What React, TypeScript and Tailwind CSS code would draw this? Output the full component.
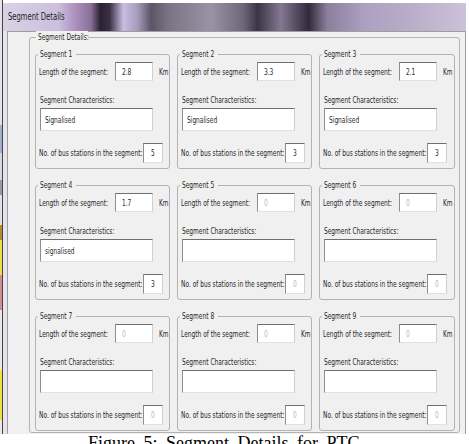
import React from "react";

type Segment = {
  n: number;
  length: string;
  chars: string;
  stations: string;
};

const segments: Segment[] = [
  { n: 1, length: "2.8", chars: "Signalised", stations: "5" },
  { n: 2, length: "3.3", chars: "Signalised", stations: "3" },
  { n: 3, length: "2.1", chars: "Signalised", stations: "3" },
  { n: 4, length: "1.7", chars: "signalised", stations: "3" },
  { n: 5, length: "0", chars: "", stations: "0" },
  { n: 6, length: "0", chars: "", stations: "0" },
  { n: 7, length: "0", chars: "", stations: "0" },
  { n: 8, length: "0", chars: "", stations: "0" },
  { n: 9, length: "0", chars: "", stations: "0" },
];

// the dialog font is rendered squeezed, so every label is narrowed
const Narrow = ({ children, className = "" }: { children: React.ReactNode; className?: string }) => (
  <span className={`inline-block origin-left scale-x-[0.62] whitespace-nowrap ${className}`}>{children}</span>
);

type FieldProps = {
  value?: string;
  disabled?: boolean;
  className: string;
};

const Field = ({ value, disabled, className }: FieldProps) => (
  <div
    className={`flex shrink-0 items-center border border-t-[#6f6f6f] border-l-[#8e8e8e] border-r-[#d0d0d0] border-b-[#e0e0e0] bg-white leading-[12px] ${className}`}
  >
    {value ? <Narrow className={disabled ? "text-[#b9b9b9]" : "text-[#2a2a2a]"}>{value}</Narrow> : null}
  </div>
);

const SegmentBox = ({ seg }: { seg: Segment }) => {
  const disabled = !seg.chars;
  return (
    <div className="relative h-[115px] rounded-[3px] border border-[#b3b3b3] pl-[3px] pt-[7px]">
      <div className="absolute -top-[7px] left-[2px] w-[38px] bg-[#f0f0f0] pl-[2px] leading-[12px]">
        <Narrow>Segment {seg.n}</Narrow>
      </div>

      <div className="flex h-[19px] items-center">
        <div className="w-[76px] shrink-0 leading-[12px]">
          <Narrow>Length of the segment:</Narrow>
        </div>
        <Field className="h-[19px] w-[38px] pl-[6px]" value={seg.length} disabled={disabled} />
        <div className="ml-[6px] leading-[12px]">
          <Narrow>Km</Narrow>
        </div>
      </div>

      <div className="mt-[13px] pl-[1px] leading-[12px]">
        <Narrow>Segment Characteristics:</Narrow>
      </div>
      <Field className="ml-[1px] mt-[2px] h-[23px] w-[113px] pl-[4px]" value={seg.chars} />

      <div className="mt-[12px] flex h-[20px] items-center">
        <div className="w-[104px] shrink-0 leading-[12px]">
          <Narrow>No. of bus stations in the segment:</Narrow>
        </div>
        <Field className="h-[20px] w-[20px] pl-[7px]" value={seg.stations} disabled={disabled} />
      </div>
    </div>
  );
};

// strip of the window lying behind the dialog
const DesktopEdge = () => (
  <div className="flex h-full w-[3px] shrink-0 flex-col border-r border-[#444]">
    <div className="h-[125px] bg-[#e4e4e8]" />
    <div className="h-[28px] bg-[#9fb0cf]" />
    <div className="h-[27px] bg-[#d9d9dd]" />
    <div className="h-[15px] bg-[#9a9aa0]" />
    <div className="h-[30px] bg-[#e2e2e2]" />
    <div className="h-[15px] bg-[#b8892e]" />
    <div className="h-[35px] bg-[#ece040]" />
    <div className="h-[35px] bg-[#d48a90]" />
    <div className="h-[60px] bg-[#e8e8e8]" />
    <div className="h-[50px] bg-[#efe23a]" />
    <div className="flex-1 bg-[#e8e8e8]" />
  </div>
);

const TitleBar = () => (
  <div className="flex h-[28px] shrink-0 items-center bg-[linear-gradient(90deg,#d9d2e6_0%,#cbbfdc_12%,#b397c4_15%,#8a6f9a_19%,#2b2232_21%,#3a2f45_23%,#c9bde0_26%,#a89cbd_29%,#5b5566_32%,#7c7585_36%,#9a92a6_45%,#6d6678_52%,#3b3446_55%,#847891_60%,#322a3c_66%,#8c7f9c_70%,#ad9fc0_78%,#b9adc9_88%,#cdc2d9_100%)] pl-[5px]">
    <Narrow className="scale-x-[0.6] text-[11px] leading-[14px] text-[#1c1c1c]">Segment Details</Narrow>
  </div>
);

export default function App() {
  return (
    <div className="h-[444px] w-[469px] overflow-hidden bg-white font-['DejaVu_Sans',sans-serif] text-[9.5px] text-[#262626]">
      <div className="flex h-[434px]">
        <DesktopEdge />
        <div className="flex w-[463px] shrink-0 flex-col pt-[3px]">
          <TitleBar />
          <div className="flex flex-1">
            <div className="w-[4px] shrink-0 bg-[#e7e3ec]" />
            <div className="flex-1 border-x border-t border-[#9d9d9d] bg-[#f0f0f0] pl-[21px] pt-[5px]">
              <div className="relative h-[396px] w-[431px] rounded-[3px] border border-[#b3b3b3] pl-[5px] pt-[16px]">
                <div className="absolute -top-[7px] left-[6px] w-[52px] bg-[#f0f0f0] pl-[2px] leading-[12px]">
                  <Narrow>Segment Details:</Narrow>
                </div>
                <div className="grid grid-cols-[135px_135px_136px] gap-x-[7px] gap-y-[16px]">
                  {segments.map((seg) => (
                    <SegmentBox key={seg.n} seg={seg} />
                  ))}
                </div>
              </div>
            </div>
          </div>
        </div>
      </div>
      <p className="pl-[88px] font-['Liberation_Serif',serif] text-[18px] leading-[18px] whitespace-nowrap text-black [word-spacing:4px]">
        Figure 5: Segment Details for PTC
      </p>
    </div>
  );
}
